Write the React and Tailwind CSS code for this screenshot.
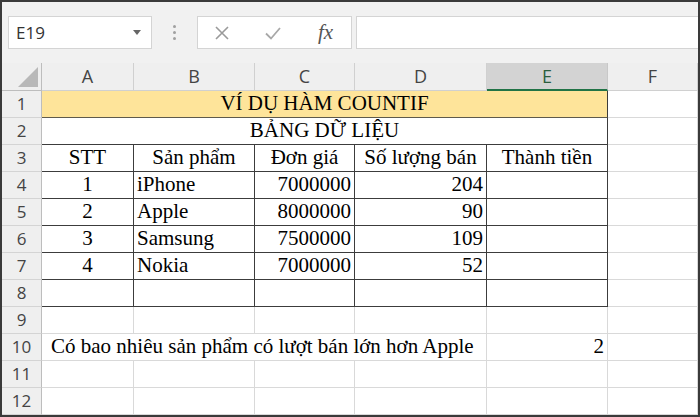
const cols = ['A', 'B', 'C', 'D', 'E', 'F'];

const data = [
  ['1', 'iPhone', '7000000', '204'],
  ['2', 'Apple', '8000000', '90'],
  ['3', 'Samsung', '7500000', '109'],
  ['4', 'Nokia', '7000000', '52'],
  ['', '', '', ''],
];

const serif = { fontFamily: '"Liberation Serif", "Times New Roman", serif' };

function RowHead({ n }) {
  return (
    <div className="flex items-center justify-center border-b border-r border-b-[#d4d4d4] border-r-[#bdbdbd] bg-[#efefef] text-[17px] text-[#444]">
      {n}
    </div>
  );
}

function Cell({ children, dark, align = 'left', className = '' }) {
  const alignCls = align === 'center' ? 'justify-center' : align === 'right' ? 'justify-end pr-[3px]' : 'justify-start pl-[3px]';
  return (
    <div
      className={`flex items-center overflow-hidden whitespace-nowrap border-b border-r text-[21px] text-black ${alignCls} ${dark ? 'border-[#3c3c3c]' : 'border-[#d9d9d9]'} ${className}`}
      style={serif}
    >
      {children}
    </div>
  );
}

export default function App() {
  return (
    <div className="h-[417px] w-[700px] overflow-hidden border-2 border-[#3a3a3a] bg-white" style={{ fontFamily: '"Open Sans", "Noto Sans", sans-serif' }}>
      {/* formula bar */}
      <div className="flex h-[61px] items-center bg-[#f1f1f1] pl-[6px]">
        <div className="flex h-[33px] w-[144px] items-center justify-between border border-[#d4d4d4] bg-white pl-[7px] pr-[10px] text-[17px] text-[#333]">
          <span>E19</span>
          <svg width="8" height="5" viewBox="0 0 8 5"><path d="M0 0h8L4 5z" fill="#666" /></svg>
        </div>
        <div className="flex w-[45px] flex-col items-center gap-[3px]">
          <span className="h-[3px] w-[3px] rounded-full bg-[#a0a0a0]" />
          <span className="h-[3px] w-[3px] rounded-full bg-[#a0a0a0]" />
          <span className="h-[3px] w-[3px] rounded-full bg-[#a0a0a0]" />
        </div>
        <div className="flex h-[33px] w-[155px] items-center border border-[#d4d4d4] bg-white">
          <svg className="ml-[16px]" width="16" height="16" viewBox="0 0 16 16"><path d="M2 2l12 12M14 2L2 14" stroke="#9a9a9a" strokeWidth="1.6" /></svg>
          <svg className="ml-[34px]" width="18" height="16" viewBox="0 0 18 16"><path d="M2 8.5l5 5L16 3" stroke="#a8a8a8" strokeWidth="1.8" fill="none" /></svg>
          <span className="ml-[36px] text-[21px] italic text-[#555]" style={serif}>fx</span>
        </div>
        <div className="ml-[4px] h-[33px] flex-1 border-y border-l border-[#d4d4d4] bg-white" />
      </div>

      <div className="grid grid-cols-[40px_92px_121px_100px_132px_121px_1fr] grid-rows-[28px_repeat(12,27px)]">
        {/* corner */}
        <div className="relative border-b border-r border-[#bdbdbd] bg-[#efefef]">
          <svg className="absolute bottom-[3px] right-[3px]" width="20" height="20" viewBox="0 0 20 20"><path d="M20 0V20H0z" fill="#b8b8b8" /></svg>
        </div>
        {cols.map((c) => (
          <div
            key={c}
            className={`flex items-center justify-center border-r text-[18px] ${c === 'E' ? 'border-b-2 border-b-[#217346] border-r-[#c8c8c8] bg-[#d3d3d3] text-[#2b5e3e]' : 'border-b border-[#d0d0d0] bg-[#efefef] text-[#444]'}`}
          >
            {c}
          </div>
        ))}

        {/* row 1 */}
        <RowHead n={1} />
        <Cell dark align="center" className="col-span-5 bg-[#fee49a] !border-b-[#5e5a4c]">VÍ DỤ HÀM COUNTIF</Cell>
        <Cell />

        {/* row 2 */}
        <RowHead n={2} />
        <Cell dark align="center" className="col-span-5">BẢNG DỮ LIỆU</Cell>
        <Cell />

        {/* row 3 */}
        <RowHead n={3} />
        <Cell dark align="center">STT</Cell>
        <Cell dark align="center">Sản phẩm</Cell>
        <Cell dark align="center">Đơn giá</Cell>
        <Cell dark align="center">Số lượng bán</Cell>
        <Cell dark align="center">Thành tiền</Cell>
        <Cell />

        {data.map((r, i) => [
          <RowHead key={`h${i}`} n={i + 4} />,
          <Cell key={`a${i}`} dark align="center">{r[0]}</Cell>,
          <Cell key={`b${i}`} dark>{r[1]}</Cell>,
          <Cell key={`c${i}`} dark align="right">{r[2]}</Cell>,
          <Cell key={`d${i}`} dark align="right">{r[3]}</Cell>,
          <Cell key={`e${i}`} dark />,
          <Cell key={`f${i}`} />,
        ])}

        {/* row 9 */}
        <RowHead n={9} />
        {cols.map((c) => <Cell key={`9${c}`} />)}

        {/* row 10 */}
        <RowHead n={10} />
        <Cell className="col-span-4 !pl-[9px]">Có bao nhiêu sản phẩm có lượt bán lớn hơn Apple</Cell>
        <Cell align="right">2</Cell>
        <Cell />

        {[11, 12].map((n) => [
          <RowHead key={`h${n}`} n={n} />,
          ...cols.map((c) => <Cell key={`${n}${c}`} />),
        ])}
      </div>
    </div>
  );
}
